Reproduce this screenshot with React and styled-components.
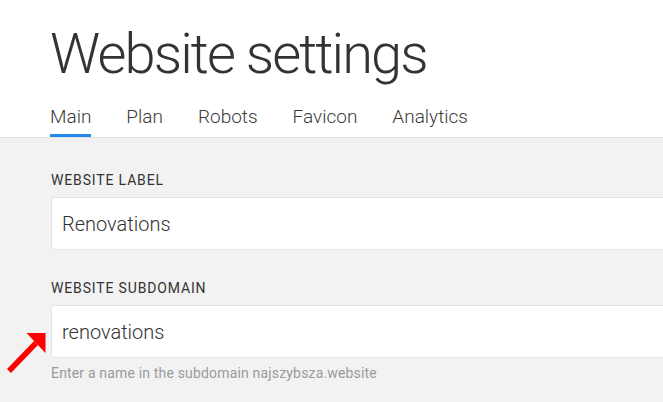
import React from "react";
import styled, { createGlobalStyle } from "styled-components";

const GlobalStyle = createGlobalStyle`
  html, body {
    margin: 0;
    padding: 0;
    background: #f2f2f2;
    overflow: hidden;
  }
  body {
    font-family: Roboto, "Liberation Sans", sans-serif;
    color: #333;
  }
`;

const Page = styled.div`
  position: relative;
  min-height: 402px;
`;

const Header = styled.header`
  background: #fff;
  border-bottom: 1px solid #e2e2e2;
  padding: 26px 0 0 50px;
`;

const Title = styled.h1`
  margin: 0;
  font-size: 56px;
  line-height: 56px;
  font-weight: 300;
  letter-spacing: -1.9px;
  color: #333;
`;

const Tabs = styled.nav`
  display: flex;
  gap: 35px;
  margin-top: 23px;
`;

const Tab = styled.a`
  display: block;
  font-size: 19px;
  line-height: 24px;
  font-weight: 300;
  color: #3a3a3a;
  padding-bottom: 5px;
  border-bottom: 3px solid ${(p) => (p.$active ? "#2388ee" : "transparent")};
  text-decoration: none;
  cursor: pointer;
`;

const Content = styled.main`
  padding: 34px 0 0 50px;
`;

const Field = styled.div`
  display: flex;
  flex-direction: column;
  & + & {
    margin-top: 30px;
  }
`;

const Label = styled.label`
  font-size: 14px;
  line-height: 16px;
  font-weight: 400;
  letter-spacing: 0.85px;
  color: #333;
  text-transform: uppercase;
  margin-left: 1px;
`;

const Input = styled.input`
  box-sizing: border-box;
  width: 640px;
  height: 53px;
  margin: 9px 0 0 1px;
  padding: 0 10px;
  background: #fff;
  border: 1px solid #e4e4e4;
  border-radius: 3px;
  font-family: inherit;
  font-size: 20px;
  font-weight: 300;
  color: #333;
  outline: none;
`;

const Hint = styled.div`
  margin: 7px 0 0 1px;
  font-size: 14px;
  line-height: 16px;
  letter-spacing: 0.17px;
  color: #9a9a9a;
`;

const Arrow = styled.svg`
  position: absolute;
  left: 0;
  top: 328px;
`;

const tabs = ["Main", "Plan", "Robots", "Favicon", "Analytics"];

export default function App() {
  return (
    <Page>
      <GlobalStyle />
      <Header>
        <Title>Website settings</Title>
        <Tabs>
          {tabs.map((t, i) => (
            <Tab key={t} $active={i === 0}>
              {t}
            </Tab>
          ))}
        </Tabs>
      </Header>
      <Content>
        <Field>
          <Label>Website label</Label>
          <Input defaultValue="Renovations" />
        </Field>
        <Field>
          <Label>Website subdomain</Label>
          <Input defaultValue="renovations" />
          <Hint>Enter a name in the subdomain najszybsza.website</Hint>
        </Field>
      </Content>
      <Arrow width="50" height="50" viewBox="0 0 50 50">
        <line x1="9" y1="43" x2="36" y2="15" stroke="#ff0000" strokeWidth="5.5" />
        <polygon points="26.5,5 45.5,5 45.5,25" fill="#ff0000" />
      </Arrow>
    </Page>
  );
}
